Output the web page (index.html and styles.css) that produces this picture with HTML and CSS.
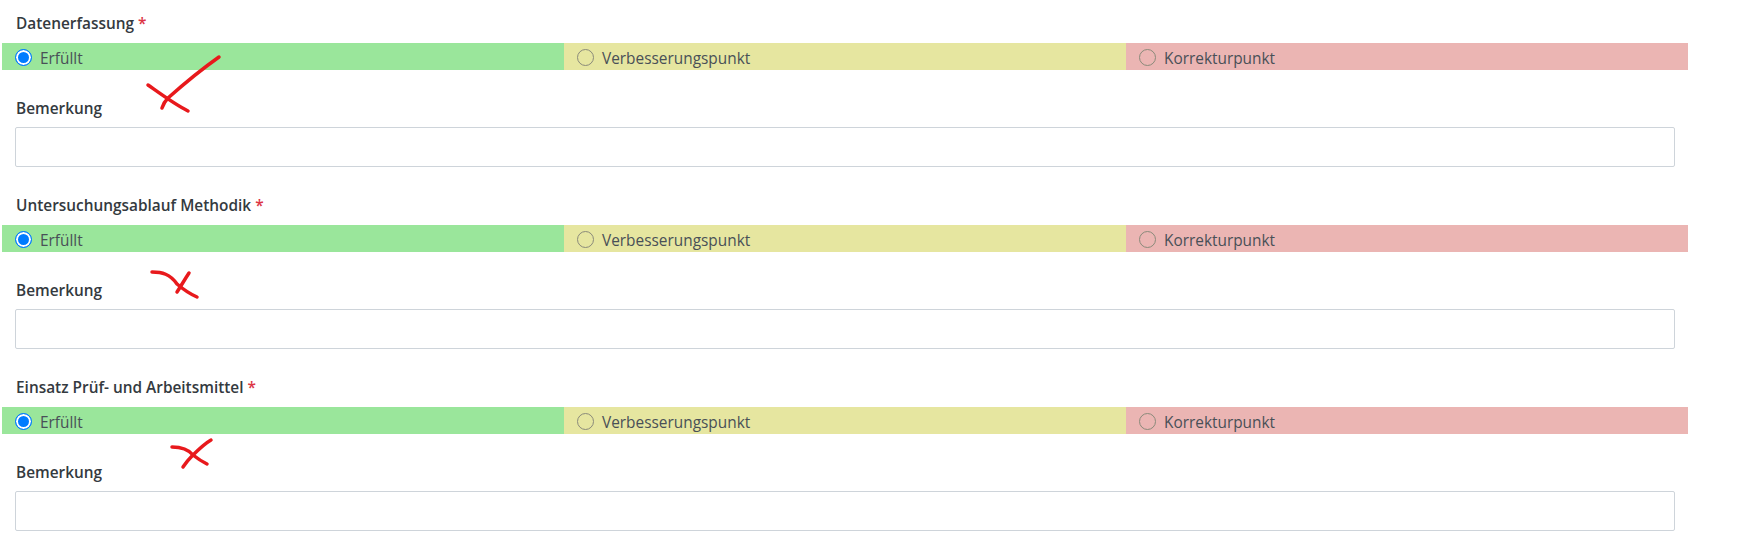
FILE: index.html
```html
<!doctype html>
<html lang="de">
  <head>
    <meta charset="UTF-8" />
    <title>Bewertung</title>
    <link rel="stylesheet" href="styles.css">
  </head>
  <body>
    <form class="review-form">
      <div class="form-group">
        <label class="field-label">Datenerfassung <span class="required">*</span></label>
        <div class="rating">
          <label class="rating-option option-ok"><input type="radio" name="r1" checked /><span>Erfüllt</span></label>
          <label class="rating-option option-improve"><input type="radio" name="r1" /><span>Verbesserungspunkt</span></label>
          <label class="rating-option option-fix"><input type="radio" name="r1" /><span>Korrekturpunkt</span></label>
        </div>
        <label class="field-label remark-label">Bemerkung</label>
        <input type="text" class="remark-input" />
        <svg class="scribble" viewBox="0 0 260 160" fill="none">
          <path d="M217 45 C200 57 184 70 166 86 C162 90 161 93 160 96" />
          <path d="M146 73 C156 80 172 92 186 99" />
        </svg>
      </div>
      <div class="form-group">
        <label class="field-label">Untersuchungsablauf Methodik <span class="required">*</span></label>
        <div class="rating">
          <label class="rating-option option-ok"><input type="radio" name="r2" checked /><span>Erfüllt</span></label>
          <label class="rating-option option-improve"><input type="radio" name="r2" /><span>Verbesserungspunkt</span></label>
          <label class="rating-option option-fix"><input type="radio" name="r2" /><span>Korrekturpunkt</span></label>
        </div>
        <label class="field-label remark-label">Bemerkung</label>
        <input type="text" class="remark-input" />
        <svg class="scribble" viewBox="0 0 260 160" fill="none">
          <path d="M150 78 C160 78 168 80 175 90 C182 96 188 100 195 103" />
          <path d="M187 79 C183 85 179 92 175 98" />
        </svg>
      </div>
      <div class="form-group">
        <label class="field-label">Einsatz Prüf- und Arbeitsmittel <span class="required">*</span></label>
        <div class="rating">
          <label class="rating-option option-ok"><input type="radio" name="r3" checked /><span>Erfüllt</span></label>
          <label class="rating-option option-improve"><input type="radio" name="r3" /><span>Verbesserungspunkt</span></label>
          <label class="rating-option option-fix"><input type="radio" name="r3" /><span>Korrekturpunkt</span></label>
        </div>
        <label class="field-label remark-label">Bemerkung</label>
        <input type="text" class="remark-input" />
        <svg class="scribble" viewBox="0 0 260 160" fill="none">
          <path d="M170 71 C178 71 186 73 191 79 C196 83 201 86 205 88" />
          <path d="M209 64 C202 68 196 74 190 80 C186 84 183 88 181 91" />
        </svg>
      </div>
    </form>
  </body>
</html>
```

FILE: styles.css
```css
body {
  margin: 0;
  background-color: #fff;
  font-family: "Open Sans", sans-serif;
  color: #212529;
}

.review-form {
  width: 1686px;
  padding: 12px 0 0 2px;
}

.form-group {
  position: relative;
  height: 182px;
}

.field-label {
  display: block;
  height: 24px;
  margin-bottom: 7px;
  padding-left: 14px;
  font-size: 15.4px;
  font-weight: 600;
  line-height: 23px;
  color: #343a40;
}

.required {
  color: #dc3545;
}

.rating {
  display: flex;
  height: 27px;
}

.rating-option {
  flex: 1;
  display: flex;
  align-items: center;
  gap: 8px;
  padding-left: 13px;
  font-size: 15.4px;
  line-height: 27px;
  color: #495057;
}

.rating-option span {
  position: relative;
  top: 2px;
}

.rating-option input {
  appearance: none;
  width: 17px;
  height: 17px;
  margin: 1px 0 0;
  border: 1px solid #8a8a7a;
  border-radius: 50%;
}

.rating-option input:checked {
  border-color: #007bff;
  background-color: #007bff;
  box-shadow: inset 0 0 0 2px #fff;
}

.option-ok {
  background-color: #9ae69b;
}

.option-improve {
  background-color: #e6e6a0;
}

.option-fix {
  background-color: #ebb5b3;
}

.remark-label {
  margin-top: 27px;
  margin-bottom: 6px;
}

.remark-input {
  display: block;
  box-sizing: border-box;
  width: 1660px;
  height: 40px;
  margin-left: 13px;
  border: 1px solid #ced4da;
  border-radius: 2px;
}

.scribble {
  position: absolute;
  left: 0;
  top: 0;
  width: 260px;
  height: 160px;
  pointer-events: none;
}

.scribble path {
  stroke: #e8191c;
  stroke-width: 3.5;
  stroke-linecap: round;
  stroke-linejoin: round;
}
```
